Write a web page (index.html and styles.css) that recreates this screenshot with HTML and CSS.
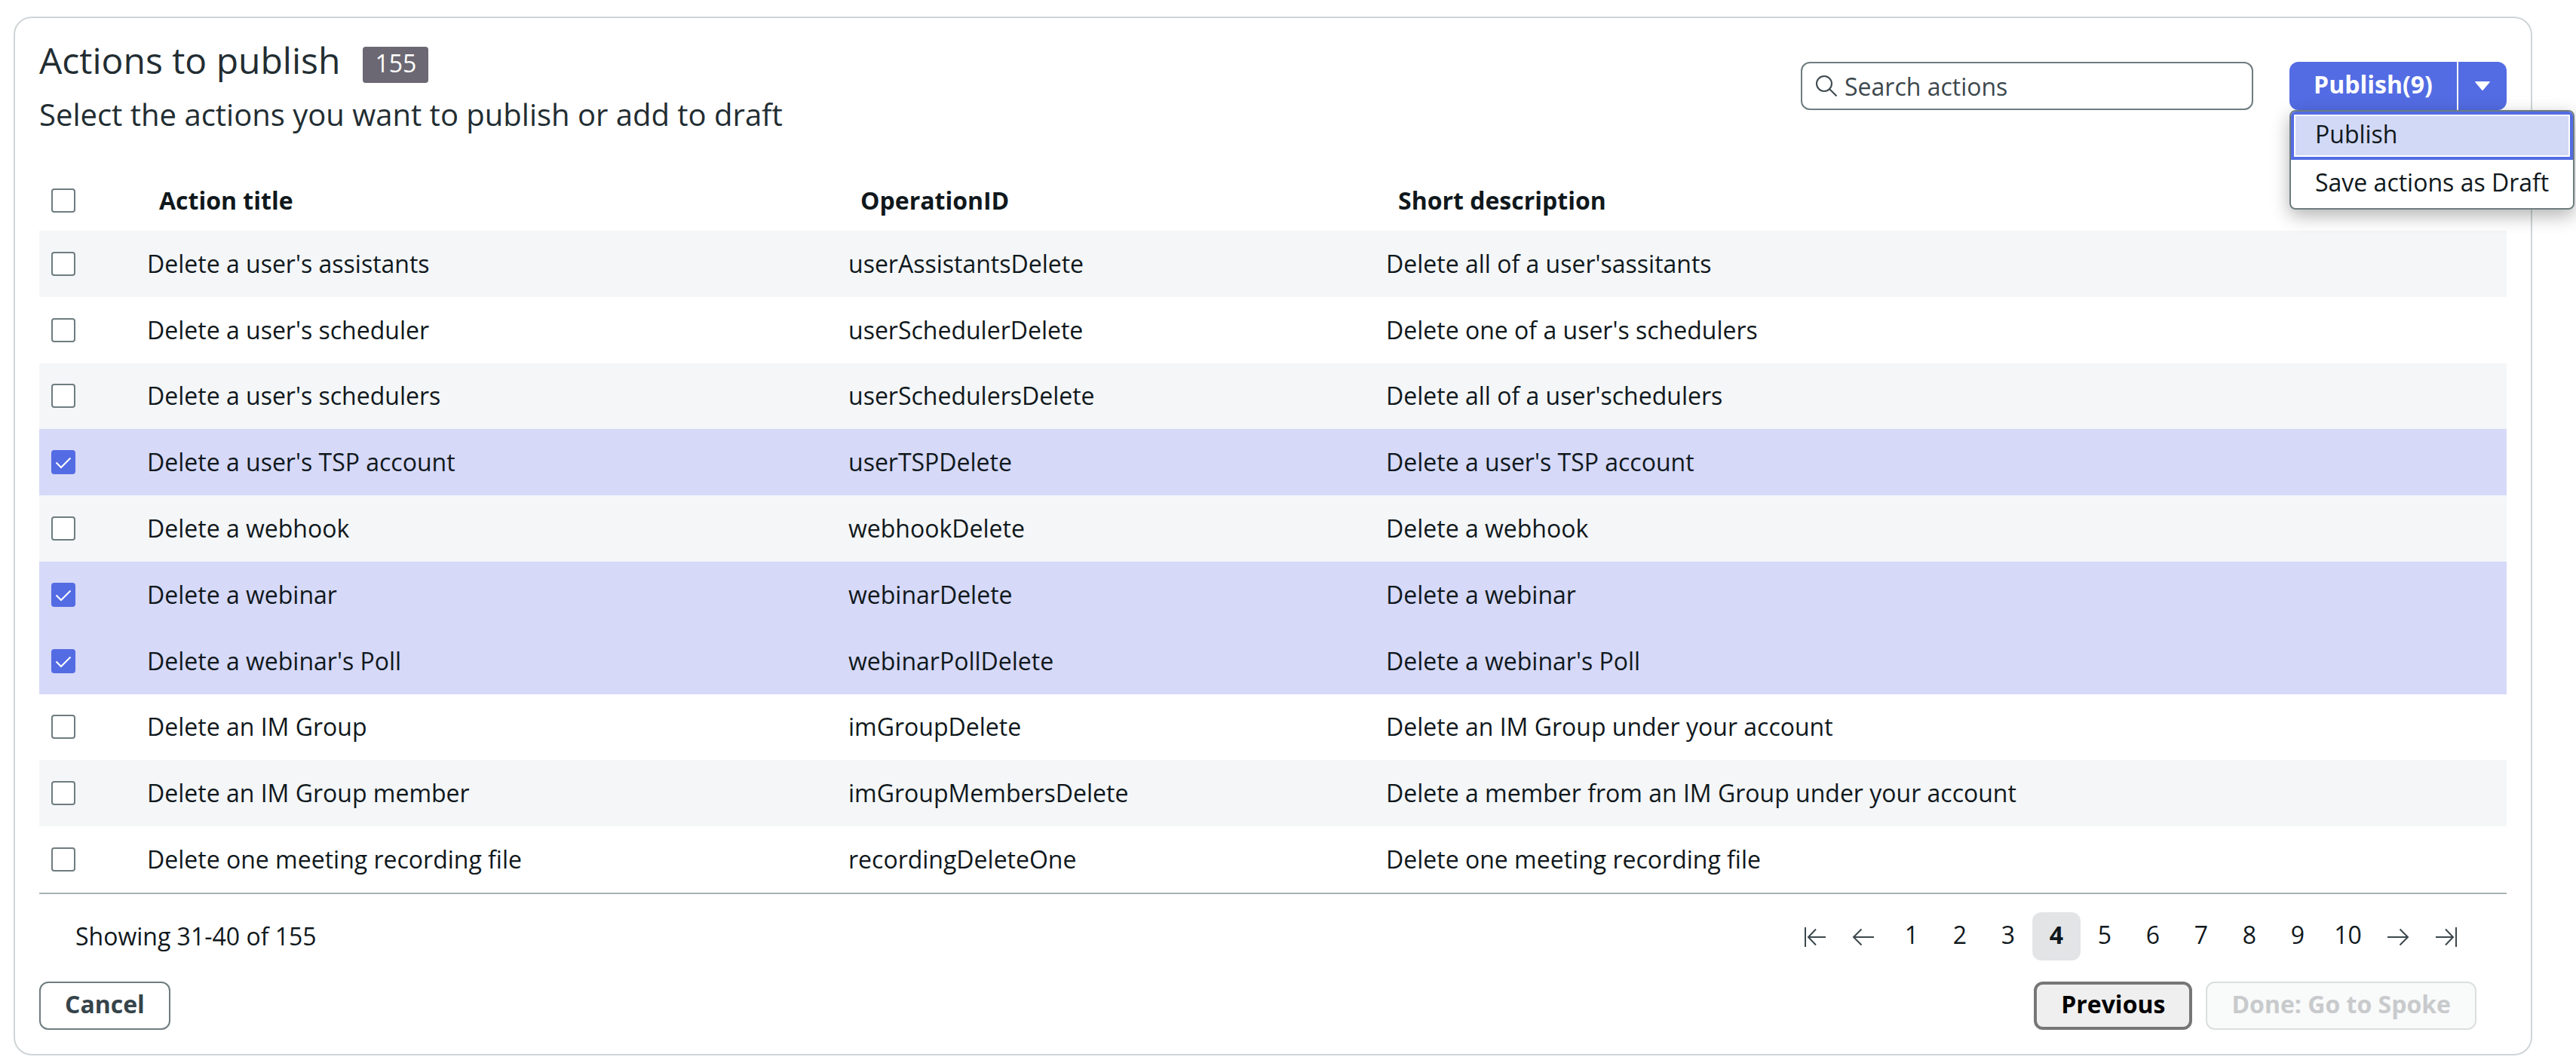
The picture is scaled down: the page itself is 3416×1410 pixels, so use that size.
FILE: index.html
```html
<!DOCTYPE html>
<html lang="en">
<head>
  <meta charset="UTF-8">
  <meta name="viewport" content="width=device-width, initial-scale=1.0">
  <title>Actions to publish</title>
  <link rel="stylesheet" href="styles.css">
</head>
<body>
  <main class="card">
    <header class="card-header">
      <div class="heading">
        <div class="title-row">
          <h1>Actions to publish</h1>
          <span class="badge">155</span>
        </div>
        <p class="subtitle">Select the actions you want to publish or add to draft</p>
      </div>
      <div class="tools">
        <label class="search">
          <svg class="search-icon" viewBox="0 0 28 28"><circle cx="11" cy="11" r="10"/><path d="M18 18l9.5 9.5"/></svg>
          <input type="text" placeholder="Search actions">
        </label>
        <div class="split-button">
          <button class="split-main">Publish(9)</button>
          <button class="split-toggle" aria-label="More options"><svg viewBox="0 0 20 12"><path d="M1 0h18q1.500 0 .5 1.200L10.800 11.500q-.8.800-1.600 0L.5 1.200Q-.5 0 1 0z"/></svg></button>
          <div class="menu">
            <div class="menu-item active">Publish</div>
            <div class="menu-item">Save actions as Draft</div>
          </div>
        </div>
      </div>
    </header>

    <section class="table">
      <div class="row head"><span class="checkbox"></span><span>Action title</span><span>OperationID</span><span>Short description</span></div>
      <div class="row"><span class="checkbox"></span><span>Delete a user's assistants</span><span>userAssistantsDelete</span><span>Delete all of a user'sassitants</span></div>
      <div class="row"><span class="checkbox"></span><span>Delete a user's scheduler</span><span>userSchedulerDelete</span><span>Delete one of a user's schedulers</span></div>
      <div class="row"><span class="checkbox"></span><span>Delete a user's schedulers</span><span>userSchedulersDelete</span><span>Delete all of a user'schedulers</span></div>
      <div class="row selected"><span class="checkbox checked"><svg viewBox="0 0 32 32"><path d="M6.500 16.500L13 23 25.500 10.500"/></svg></span><span>Delete a user's TSP account</span><span>userTSPDelete</span><span>Delete a user's TSP account</span></div>
      <div class="row"><span class="checkbox"></span><span>Delete a webhook</span><span>webhookDelete</span><span>Delete a webhook</span></div>
      <div class="row selected"><span class="checkbox checked"><svg viewBox="0 0 32 32"><path d="M6.500 16.500L13 23 25.500 10.500"/></svg></span><span>Delete a webinar</span><span>webinarDelete</span><span>Delete a webinar</span></div>
      <div class="row selected"><span class="checkbox checked"><svg viewBox="0 0 32 32"><path d="M6.500 16.500L13 23 25.500 10.500"/></svg></span><span>Delete a webinar's Poll</span><span>webinarPollDelete</span><span>Delete a webinar's Poll</span></div>
      <div class="row"><span class="checkbox"></span><span>Delete an IM Group</span><span>imGroupDelete</span><span>Delete an IM Group under your account</span></div>
      <div class="row"><span class="checkbox"></span><span>Delete an IM Group member</span><span>imGroupMembersDelete</span><span>Delete a member from an IM Group under your account</span></div>
      <div class="row"><span class="checkbox"></span><span>Delete one meeting recording file</span><span>recordingDeleteOne</span><span>Delete one meeting recording file</span></div>
    </section>

    <div class="pager">
      <span>Showing 31-40 of 155</span>
      <nav class="pages">
        <a class="page"><svg viewBox="0 0 32 32"><path d="M3 3v26M30 16H7M17 5.500L7 16l10 10.500"/></svg></a>
        <a class="page"><svg viewBox="0 0 32 32"><path d="M30 16H3M13.500 5.500L3 16l10.500 10.500"/></svg></a>
        <a class="page">1</a>
        <a class="page">2</a>
        <a class="page">3</a>
        <a class="page current">4</a>
        <a class="page">5</a>
        <a class="page">6</a>
        <a class="page">7</a>
        <a class="page">8</a>
        <a class="page">9</a>
        <a class="page ten">10</a>
        <a class="page"><svg viewBox="0 0 32 32"><path d="M2 16h27M18.500 5.500L29 16 18.500 26.500"/></svg></a>
        <a class="page"><svg viewBox="0 0 32 32"><path d="M29 3v26M2 16h23M15 5.500L25 16 15 26.500"/></svg></a>
      </nav>
    </div>

    <footer class="card-footer">
      <button class="btn cancel">Cancel</button>
      <div class="footer-right">
        <button class="btn previous">Previous</button>
        <button class="btn done" disabled>Done: Go to Spoke</button>
      </div>
    </footer>
  </main>
</body>
</html>
```

FILE: styles.css
```css
* {
  box-sizing: border-box;
}
body {
  margin: 0;
  padding: 22px 58px 0 18px;
  background: #fff;
  color: #10181c;
  font-family: "Open Sans", "Noto Sans", sans-serif;
  font-size: 32px;
  line-height: 44px;
  overflow: hidden;
}
button, input {
  font-family: inherit;
  font-size: inherit;
  line-height: inherit;
}
.card {
  height: 1378px;
  padding: 0 32px;
  border: 2px solid #cfd5d7;
  border-radius: 24px;
}
.card-header {
  display: flex;
  justify-content: space-between;
  height: 202px;
}
.title-row {
  display: flex;
  gap: 30px;
  align-items: center;
  height: 60px;
  margin-top: 26px;
}
h1 {
  margin: 0;
  color: #222d32;
  font-size: 48px;
  font-weight: 400;
  line-height: 60px;
}
.badge {
  height: 48px;
  margin-top: 12px;
  padding: 0 16px;
  border-radius: 4px;
  background: #6b6873;
  color: #fff;
}
.subtitle {
  margin: 15px 0 0;
  color: #222d32;
  font-size: 40px;
  line-height: 54px;
}
.tools {
  display: flex;
  gap: 48px;
  margin-top: 58px;
}
.search {
  display: flex;
  align-items: center;
  gap: 10px;
  width: 600px;
  height: 64px;
  padding: 0 18px;
  border: 2px solid #6e7c80;
  border-radius: 12px;
}
.search-icon {
  width: 28px;
  height: 28px;
  fill: none;
  stroke: #3c484d;
  stroke-width: 2;
}
.search input {
  flex: 1;
  padding: 2px 0 0;
  border: 0;
  outline: 0;
}
.search input::placeholder {
  color: #3c484d;
}
.split-button {
  position: relative;
  display: flex;
  gap: 2px;
  width: 288px;
  height: 64px;
}
.split-main, .split-toggle {
  padding: 0;
  border: 0;
  background: #536ce3;
  color: #fff;
  font-weight: 700;
}
.split-main {
  width: 222px;
  padding-bottom: 4px;
  border-radius: 12px 0 0 12px;
}
.split-toggle {
  flex: 1;
  border-radius: 0 12px 12px 0;
}
.split-toggle svg {
  display: block;
  width: 20px;
  height: 12px;
  margin: 0 auto;
  fill: #fff;
}
.menu {
  position: absolute;
  top: 64px;
  left: 0;
  width: 378px;
  height: 132px;
  border: 2px solid #6e7c80;
  border-radius: 8px;
  background: #fff;
  box-shadow: 0 8px 24px rgba(0, 0, 0, 0.3);
  white-space: nowrap;
  overflow: hidden;
}
.menu-item {
  height: 64px;
  padding: 8px 32px;
}
.menu-item.active {
  padding: 4px 28px;
  border: 4px solid #536ce3;
  background: #d2d9f6;
  box-shadow: inset 0 0 0 2px #fff;
}
.table {
  border-bottom: 2px solid #a9b2b5;
}
.row {
  display: grid;
  grid-template-columns: 143px 930px 713px 1fr;
  align-items: center;
  height: 87.8px;
}
.row.head {
  height: 80px;
  font-weight: 700;
}
.row.head span:not(.checkbox) {
  padding-left: 16px;
}
.row:nth-child(even) {
  background: #f4f6f8;
}
.row.selected {
  background: #d6d9f8;
}
.checkbox {
  width: 32px;
  height: 32px;
  margin-left: 16px;
  border: 2px solid #6e7c80;
  border-radius: 4px;
  background: #fff;
}
.checkbox.checked {
  border: 0;
  background: #536ce3;
}
.checkbox svg {
  display: block;
  fill: none;
  stroke: #fff;
  stroke-width: 2;
}
.pager {
  display: flex;
  align-items: center;
  justify-content: space-between;
  height: 112px;
  padding: 0 48px;
}
.pages {
  display: flex;
}
.page {
  display: flex;
  justify-content: center;
  width: 64px;
  height: 64px;
  padding-top: 8px;
}
.page svg {
  width: 32px;
  height: 32px;
  margin-top: 9px;
  fill: none;
  stroke: #3c484d;
  stroke-width: 2;
}
.page.current {
  border-radius: 12px;
  background: #e2e4e6;
  font-weight: 700;
}
.page.ten {
  width: 69px;
}
.card-footer {
  display: flex;
  justify-content: space-between;
  padding: 4px 40px 0 0;
}
.footer-right {
  display: flex;
  gap: 18px;
}
.btn {
  height: 64px;
  padding: 0 32px 4px;
  border: 2px solid #6e7c80;
  border-radius: 12px;
  background: #fff;
  font-weight: 700;
}
.cancel {
  color: #36444a;
}
.previous {
  border: 4px solid #767676;
  background: #efefef;
  color: #000;
}
.done {
  border-color: #dbdfe0;
  background: #f9fafa;
  color: #c8cacc;
}
```
